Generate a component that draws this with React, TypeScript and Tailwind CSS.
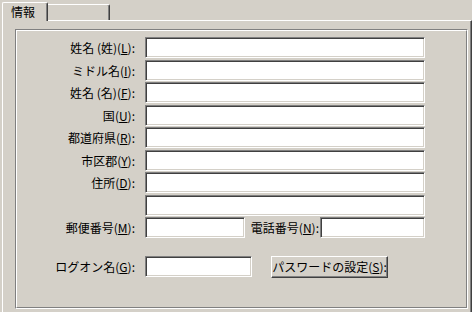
import React from 'react';

const FONT = '"Noto Sans CJK JP", "Noto Sans", sans-serif';

const Label: React.FC<{ text: string; acc?: string; className?: string }> = ({ text, acc, className }) => (
    <div className={`text-[12px] leading-none text-black whitespace-nowrap ${className ?? ''}`}>
        {text}
        {acc && (
            <>
                (<span className="underline underline-offset-1">{acc}</span>):
            </>
        )}
    </div>
);

const Field: React.FC<{ w: string }> = ({ w }) => (
    <div
        className={`${w} h-[21px] bg-white border border-t-[#808080] border-l-[#808080] border-r-white border-b-white shadow-[inset_1px_1px_0_#404040,inset_-1px_-1px_0_#d4d0c8]`}
    />
);

const ROWS = [
    { text: '姓名 (姓)', acc: 'L', mt: 'mt-0' },
    { text: 'ミドル名', acc: 'I', mt: 'mt-[2px]' },
    { text: '姓名 (名)', acc: 'F', mt: 'mt-[1px]' },
    { text: '国', acc: 'U', mt: 'mt-[2px]' },
    { text: '都道府県', acc: 'R', mt: 'mt-[1px]' },
    { text: '市区郡', acc: 'Y', mt: 'mt-[2px]' },
    { text: '住所', acc: 'D', mt: 'mt-[1px]' },
    { text: '', acc: undefined, mt: 'mt-[2px]' },
];

export default function App() {
    return (
        <div className="w-[472px] h-[312px] overflow-hidden bg-[#d4d0c8] pl-[2px] pt-[2px]" style={{ fontFamily: FONT }}>
            {/* tab strip */}
            <div className="flex items-start h-[18px]">
                <div className="relative z-10 w-[46px] h-[19px] bg-[#d4d0c8] border-l border-t border-r border-l-white border-t-white border-r-[#404040] rounded-t-[2px] shadow-[inset_-1px_0_0_#808080] pl-[8px] pt-[3px]">
                    <Label text="情報" />
                </div>
                <div className="mt-[2px] w-[62px] h-[16px] bg-[#d4d0c8] border-t border-r border-t-white border-r-[#404040] rounded-tr-[2px] shadow-[inset_-1px_0_0_#808080]" />
            </div>

            {/* tab page */}
            <div className="w-[470px] h-[300px] border-l border-t border-r border-l-white border-t-white border-r-[#404040] shadow-[inset_-1px_0_0_#808080] pl-[12px] pt-[8px]">
                <div className="w-[453px] h-[280px] border border-t-[#808080] border-l-[#808080] border-r-white border-b-white">
                    <div className="w-full h-full border border-t-white border-l-white border-r-[#808080] border-b-[#808080] pt-[6px]">
                        {ROWS.map((r, i) => (
                            <div key={i} className={`flex items-center h-[21px] ${r.mt}`}>
                                <div className="w-[119px] flex justify-end pr-[1px]">
                                    {r.text && <Label text={r.text} acc={r.acc} />}
                                </div>
                                <div className="ml-[9px]">
                                    <Field w="w-[280px]" />
                                </div>
                            </div>
                        ))}
                        <div className="flex items-center h-[21px] mt-px">
                            <div className="w-[119px] flex justify-end pr-[1px]">
                                <Label text="郵便番号" acc="M" />
                            </div>
                            <div className="ml-[9px]">
                                <Field w="w-[100px]" />
                            </div>
                            <div className="w-[75px] flex justify-end pr-[1px]">
                                <Label text="電話番号" acc="N" />
                            </div>
                            <Field w="w-[105px]" />
                        </div>
                        <div className="flex items-start mt-[18px]">
                            <div className="w-[119px] h-[21px] flex items-center justify-end pr-[1px]">
                                <Label text="ログオン名" acc="G" />
                            </div>
                            <div className="ml-[9px]">
                                <Field w="w-[107px]" />
                            </div>
                            <button className="ml-[19px] w-[117px] h-[22px] bg-[#d4d0c8] border border-t-white border-l-white border-r-[#404040] border-b-[#404040] shadow-[inset_-1px_-1px_0_#808080] flex items-center justify-center">
                                <Label text="パスワードの設定" acc="S" />
                            </button>
                        </div>
                    </div>
                </div>
            </div>
        </div>
    );
}
